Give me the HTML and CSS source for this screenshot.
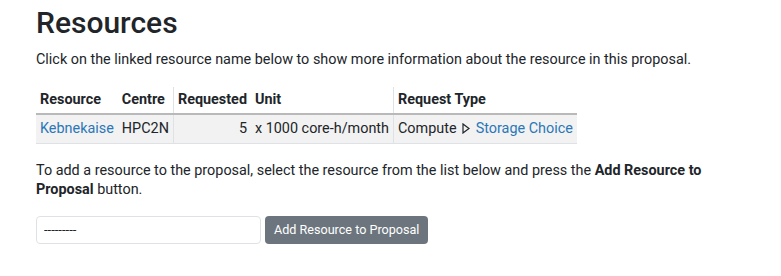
FILE: index.html
```html
<!DOCTYPE html>
<html lang="en">
<head>
<meta charset="UTF-8">
<meta name="viewport" content="width=device-width, initial-scale=1.0">
<title>Resources</title>
<link rel="stylesheet" href="styles.css">
</head>
<body>

<div class="contenido">

  <!-- Titular -->
  <h1>Resources</h1>
  <p class="intro">Click on the linked resource name below to show more information about the resource in this proposal.</p>

  <!-- Tabla de recursos -->
  <table class="recursos">
    <thead>
      <tr>
        <th>Resource</th>
        <th class="borde-der">Centre</th>
        <th>Requested</th>
        <th class="borde-der">Unit</th>
        <th>Request Type</th>
      </tr>
    </thead>
    <tbody>
      <tr>
        <td><a href="#">Kebnekaise</a></td>
        <td class="borde-der">HPC2N</td>
        <td class="num">5</td>
        <td class="borde-der">x 1000 core-h/month</td>
        <td>Compute
          <svg class="flecha" viewBox="0 0 8 11"><path d="M1 1 L7 5.5 L1 10 Z"/></svg>
          <a href="#">Storage Choice</a></td>
      </tr>
    </tbody>
  </table>

  <p class="ayuda">To add a resource to the proposal, select the resource from the list below and press the <b>Add Resource to Proposal</b> button.</p>

  <!-- Formulario -->
  <form class="agregar">
    <select class="selector">
      <option>---------</option>
    </select>
    <button type="button" class="boton">Add Resource to Proposal</button>
  </form>

</div>

</body>
</html>
```

FILE: styles.css
```css
/* ======  Variables  ====== */
:root{
  --texto      : #212529;
  --enlace     : #2a77b8;
  --gris-fila  : #f2f2f2;
  --gris-borde : #dee2e6;
  --gris-boton : #6c757d;
}

/* ======  Base  ====== */
*{box-sizing:border-box;}
body{
  margin:0;
  background:#fff;
  color:var(--texto);
  font-family:Roboto,"Liberation Sans",Arial,sans-serif;
  font-size:14.4px;
  line-height:19.5px;
}
a{color:var(--enlace);text-decoration:none;}

.contenido{
  width:712px;
  padding:3px 0 0 36px;
}

/* ======  Titular  ====== */
h1{
  margin:0 0 7px;
  font-size:30px;
  font-weight:500;
  line-height:40px;
}
p{margin:0 0 15px;}
.intro{margin-bottom:17px;}

/* ======  Tabla  ====== */
.recursos{
  border-collapse:collapse;
  margin-bottom:17px;
}
.recursos th,
.recursos td{
  padding:4px 4px;
  text-align:left;
  white-space:nowrap;
}
.recursos th{
  font-weight:700;
  padding-top:3px;
  padding-bottom:4px;
  border-bottom:2px solid #b9b9b9;
}
.recursos td{
  background:var(--gris-fila);
  border-bottom:1px solid var(--gris-borde);
}
.recursos .borde-der{border-right:1px solid var(--gris-borde);}
.recursos .num{text-align:right;}

.flecha{
  width:8px;
  height:11px;
  margin:0 2px;
  fill:none;
  stroke:var(--texto);
  stroke-width:1.2;
  vertical-align:-1px;
}

.ayuda{margin-bottom:16px;}

/* ======  Formulario  ====== */
.agregar{
  display:flex;
  gap:4px;
}
.selector{
  width:225px;
  height:28px;
  padding:0 7px;
  font-family:Roboto,"Liberation Sans",Arial,sans-serif;
  font-size:13px;
  color:var(--texto);
  background:#fff;
  border:1px solid var(--gris-borde);
  border-radius:4px;
  appearance:none;
}
.boton{
  height:28px;
  padding:0 9px;
  font-family:Roboto,"Liberation Sans",Arial,sans-serif;
  font-size:12.6px;
  color:#fff;
  background:var(--gris-boton);
  border:none;
  border-radius:4px;
}
```
